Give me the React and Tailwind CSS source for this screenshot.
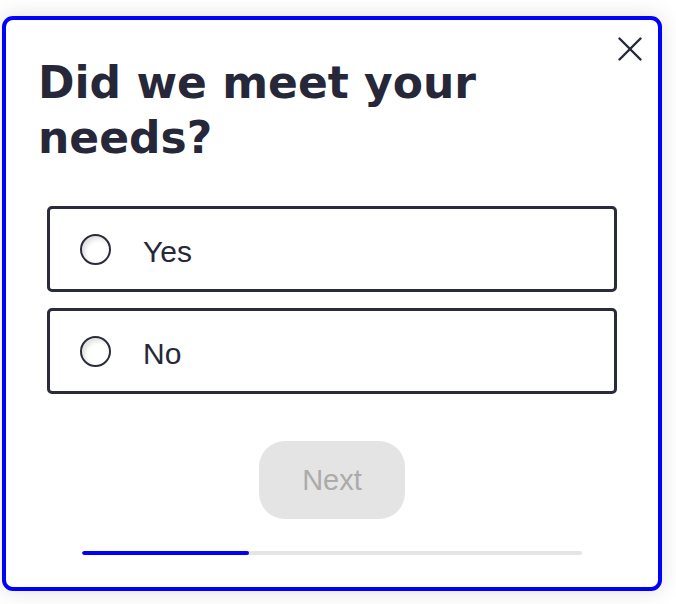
import React, { useState } from 'react';

const options = ['Yes', 'No'];

const Radio = ({ checked }) => (
  <span
    className={`block w-[31px] h-[31px] shrink-0 rounded-full border-2 border-[#2a2b3b] bg-white shadow-[inset_3px_3px_4px_rgba(0,0,0,0.12)] ${
      checked ? 'ring-4 ring-inset ring-white bg-[#2a2b3b]' : ''
    }`}
  />
);

const App = () => {
  const [picked, setPicked] = useState(null);

  return (
    <div className="w-[676px] h-[604px] bg-white pt-[16px] pl-[2px]" style={{ fontFamily: '"Liberation Sans", Arial, sans-serif' }}>
      <div className="relative w-[660px] h-[575px] rounded-[11px] border-4 border-[#0000ff] bg-white shadow-[0_0_22px_rgba(0,0,0,0.13)] px-[41px] pt-[35px] pb-[32px]">
        {/* close */}
        <button className="absolute top-[17px] right-[16px] w-[24px] h-[24px]" aria-label="Close">
          <svg width="24" height="24" viewBox="0 0 24 24" fill="none" stroke="#262839" strokeWidth="2.4" strokeLinecap="round">
            <line x1="1.5" y1="1.5" x2="22.5" y2="22.5" />
            <line x1="22.5" y1="1.5" x2="1.5" y2="22.5" />
          </svg>
        </button>

        <h1
          className="-ml-[9px] text-[44px] leading-[55px] font-bold text-[#262839]"
          style={{ fontFamily: '"DejaVu Sans", Verdana, sans-serif' }}
        >
          Did we meet your
          <br />
          needs?
        </h1>

        <div className="mt-[41px] flex flex-col gap-[16px]">
          {options.map((opt) => (
            <label
              key={opt}
              onClick={() => setPicked(opt)}
              className="flex items-center h-[86px] rounded-[5px] border-[3px] border-[#2a2b3b] pl-[30px] gap-[32px] cursor-pointer"
            >
              <Radio checked={picked === opt} />
              <span className="pt-[4px] text-[30px] text-[#262839]">{opt}</span>
            </label>
          ))}
        </div>

        <div className="mt-[47px] flex justify-center">
          <button
            disabled={!picked}
            className="w-[146px] h-[78px] rounded-[26px] bg-[#e4e4e4] pt-[2px] text-[29px] text-[#ababab]"
          >
            Next
          </button>
        </div>

        <div className="mt-[32px] mx-auto w-[500px] h-[4px] rounded-full bg-[#e5e5e5] overflow-hidden">
          <div className="h-full w-1/3 rounded-full bg-[#0000ff]" />
        </div>
      </div>
    </div>
  );
};

export default App;
